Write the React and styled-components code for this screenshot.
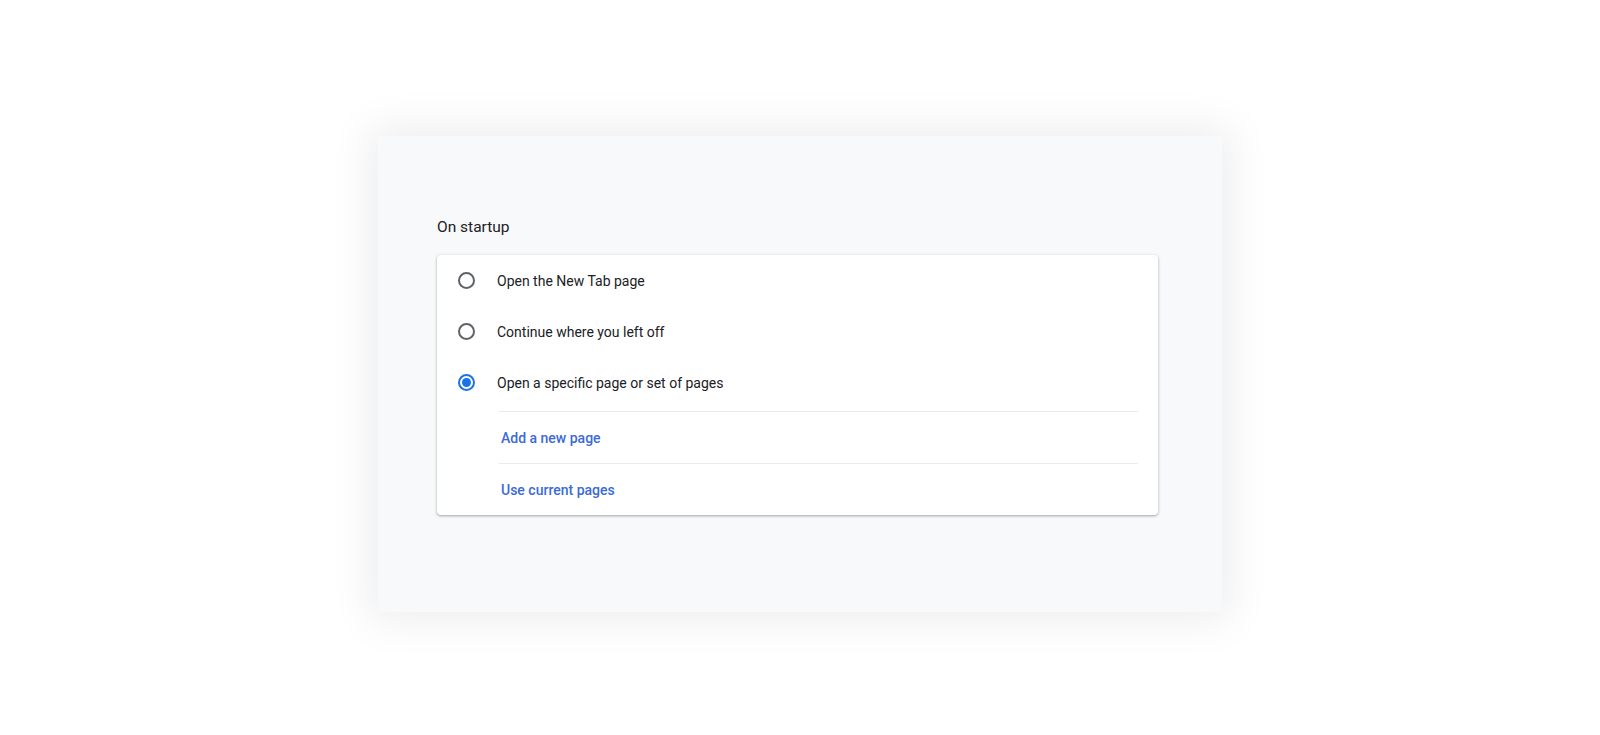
import React, { useState } from "react";
import styled, { createGlobalStyle } from "styled-components";

const GlobalStyle = createGlobalStyle`
  html, body {
    margin: 0;
    background: #ffffff;
    font-family: Roboto, "Liberation Sans", Arial, sans-serif;
  }
`;

const Page = styled.div`
  width: 1600px;
  height: 735px;
  padding: 136px 0 0 378px;
  box-sizing: border-box;
`;

const Panel = styled.section`
  width: 844px;
  height: 476px;
  box-sizing: border-box;
  padding: 81px 0 0 59px;
  background: #f8f9fa;
  box-shadow: 0 0 40px 8px rgba(0, 0, 0, 0.075);
`;

const Heading = styled.h2`
  margin: 0 0 18px;
  font-size: 15.5px;
  font-weight: 400;
  color: #202124;
  line-height: 20px;
`;

const Card = styled.div`
  width: 721px;
  background: #fff;
  border-radius: 4px;
  box-shadow: 0 1px 2px rgba(60, 64, 67, 0.3), 0 1px 3px 1px rgba(60, 64, 67, 0.12);
`;

const Row = styled.label`
  display: flex;
  align-items: center;
  height: 51px;
  padding: 0 20px 0 21px;
  gap: 22px;
  cursor: pointer;
  font-size: 14px;
  color: #202124;
`;

const Radio = styled.span`
  width: 17px;
  height: 17px;
  box-sizing: border-box;
  border-radius: 50%;
  border: 2px solid ${(p) => (p.$checked ? "#1a73e8" : "#5f6368")};
  display: flex;
  align-items: center;
  justify-content: center;
  flex-shrink: 0;

  &::after {
    content: "";
    width: 9px;
    height: 9px;
    border-radius: 50%;
    background: #1a73e8;
    display: ${(p) => (p.$checked ? "block" : "none")};
  }
`;

const SubList = styled.div`
  margin: 3px 20px 0 62px;
`;

const LinkRow = styled.div`
  height: 51px;
  display: flex;
  align-items: center;
  padding-left: 2px;
  border-top: 1px solid #e8eaed;
  font-size: 14px;
  font-weight: 500;
  color: #3b6ad8;
  cursor: pointer;
`;

const options = [
  "Open the New Tab page",
  "Continue where you left off",
  "Open a specific page or set of pages",
];

export default function App() {
  const [selected, setSelected] = useState(2);
  return (
    <Page>
      <GlobalStyle />
      <Panel>
        <Heading>On startup</Heading>
        <Card>
          {options.map((label, i) => (
            <Row key={label} onClick={() => setSelected(i)}>
              <Radio $checked={selected === i} />
              {label}
            </Row>
          ))}
          <SubList>
            <LinkRow>Add a new page</LinkRow>
            <LinkRow>Use current pages</LinkRow>
          </SubList>
        </Card>
      </Panel>
    </Page>
  );
}
